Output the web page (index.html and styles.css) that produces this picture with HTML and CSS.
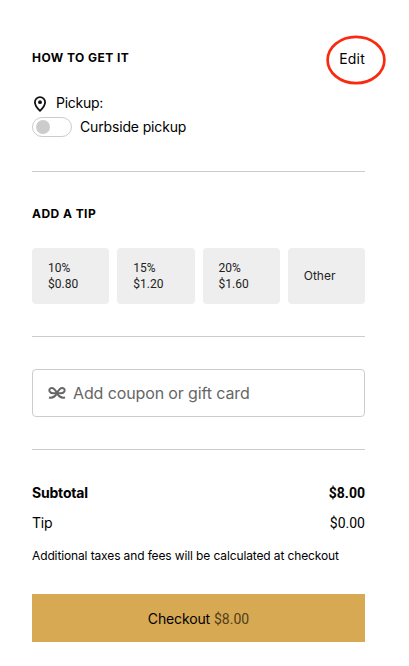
FILE: index.html
```html
<!DOCTYPE html>
<html lang="en">
<head>
<meta charset="utf-8">
<title>Cart summary</title>
<link rel="stylesheet" href="styles.css">
</head>
<body>
<main class="cart">
  <section class="pickup">
    <header class="pickup-header">
      <h2 class="title">HOW TO GET IT</h2>
      <a class="edit">Edit
        <svg class="edit-ring" width="62" height="52" viewBox="0 0 62 52" fill="none"><ellipse cx="31" cy="26" rx="28.4" ry="23.2" stroke="#fa2a10" stroke-width="2.7"/></svg>
      </a>
    </header>
    <div class="method">
      <svg width="16" height="16" viewBox="0 0 16 16" fill="none"><path d="M8 14.900C5.300 12.200 2.900 9.500 2.900 6.200a5.100 5.100 0 0 1 10.200 0C13.100 9.500 10.700 12.200 8 14.900Z" stroke="#111" stroke-width="1.800" stroke-linejoin="round"/><circle cx="8" cy="6.200" r="1.900" fill="#111"/></svg>
      <span class="method-label">Pickup:</span>
    </div>
    <label class="curbside">
      <span class="toggle"><span class="knob"></span></span>
      <span class="curbside-label">Curbside pickup</span>
    </label>
  </section>
  <section class="tips">
    <h2 class="title">ADD A TIP</h2>
    <div class="tip-options">
      <button class="tip"><span>10%</span><span>$0.80</span></button>
      <button class="tip"><span>15%</span><span>$1.20</span></button>
      <button class="tip"><span>20%</span><span>$1.60</span></button>
      <button class="tip"><span class="tip-other">Other</span></button>
    </div>
  </section>
  <section class="coupon">
    <div class="coupon-field">
      <svg width="18" height="14" viewBox="0 0 18 14" fill="none" stroke="#666" stroke-width="2"><path d="M1 11.500C4.500 12.200 7.300 10.500 9 7C10.700 3.500 12.300 1.900 14.300 1.900C16.300 1.900 17.200 4 16.200 5.600C14.900 7.500 11.500 7.500 9 6.600"/><path d="M17 11.500C13.500 12.200 10.700 10.500 9 7C7.300 3.500 5.700 1.900 3.700 1.900C1.700 1.900 .8 4 1.800 5.600C3.100 7.500 6.500 7.500 9 6.600"/></svg>
      <span class="coupon-label">Add coupon or gift card</span>
    </div>
  </section>
  <section class="totals">
    <div class="row subtotal"><span class="subtotal-label">Subtotal</span><span class="amount">$8.00</span></div>
    <div class="row"><span class="tip-label">Tip</span><span class="amount">$0.00</span></div>
    <p class="note">Additional taxes and fees will be calculated at checkout</p>
    <button class="checkout"><span class="checkout-label">Checkout</span><span class="checkout-amount">$8.00</span></button>
  </section>
</main>
</body>
</html>
```
FILE: styles.css
```css
* { box-sizing: border-box; }
body {
  margin: 0;
  background: #fff;
  color: #000;
  font-family: Inter, "Liberation Sans", sans-serif;
  font-size: 14px;
  line-height: 24px;
}
button { font: inherit; color: inherit; border: 0; }
.cart { width: 397px; padding: 0 32px; }
.title { margin: 0; font-size: 12px; font-weight: 700; line-height: 20px; letter-spacing: 0.45px; }
.pickup { height: 172px; padding-top: 47px; border-bottom: 1px solid #ccc; }
.pickup-header { display: flex; justify-content: space-between; align-items: center; height: 22px; }
.edit { position: relative; padding-top: 2px; letter-spacing: 0.2px; }
.edit-ring { position: absolute; left: -14px; top: -11px; }
.method { display: flex; align-items: center; gap: 8px; height: 24px; margin-top: 22px; }
.method svg { margin-top: 2px; }
.method-label { letter-spacing: -0.25px; }
.curbside { display: flex; align-items: center; gap: 8px; height: 20px; margin-top: 2px; }
.curbside-label { letter-spacing: -0.15px; }
.toggle { display: flex; align-items: center; width: 40px; height: 20px; padding: 0 3px; border: 1px solid #ccc; border-radius: 10px; }
.knob { width: 14px; height: 14px; border-radius: 50%; background: #ccc; }
.tips { height: 165px; padding-top: 32px; border-bottom: 1px solid #ccc; }
.tip-options { display: grid; grid-template-columns: repeat(4, 1fr); gap: 8px; margin-top: 24px; }
.tip {
  display: flex;
  flex-direction: column;
  align-items: flex-start;
  justify-content: center;
  height: 56px;
  padding: 0 16px;
  border-radius: 4px;
  background: #eee;
  color: #222;
  font-family: Roboto, sans-serif;
  font-size: 12px;
  line-height: 16px;
}
.tip-other { font-family: Inter, sans-serif; }
.coupon { height: 113px; padding-top: 32px; border-bottom: 1px solid #ccc; }
.coupon-field { display: flex; align-items: center; gap: 7px; height: 48px; padding-left: 15px; border: 1px solid #ccc; border-radius: 4px; color: #666; font-size: 16px; }
.coupon-label { letter-spacing: -0.12px; }
.totals { padding-top: 31px; }
.row { display: flex; justify-content: space-between; margin-bottom: 6px; }
.subtotal { font-weight: 700; }
.subtotal-label { letter-spacing: -0.2px; }
.tip-label { letter-spacing: -0.2px; }
.amount { font-family: Roboto, sans-serif; }
.note { margin: 13px 0 0; font-size: 12px; line-height: 16px; letter-spacing: -0.125px; }
.checkout { display: flex; align-items: center; justify-content: center; gap: 4px; width: 100%; height: 48px; margin-top: 30px; background: #d7a953; padding: 2px 0 0; color: #000; }
.checkout-label { letter-spacing: -0.15px; }
.checkout-amount { color: #503e1b; font-family: Roboto, sans-serif; }
```
